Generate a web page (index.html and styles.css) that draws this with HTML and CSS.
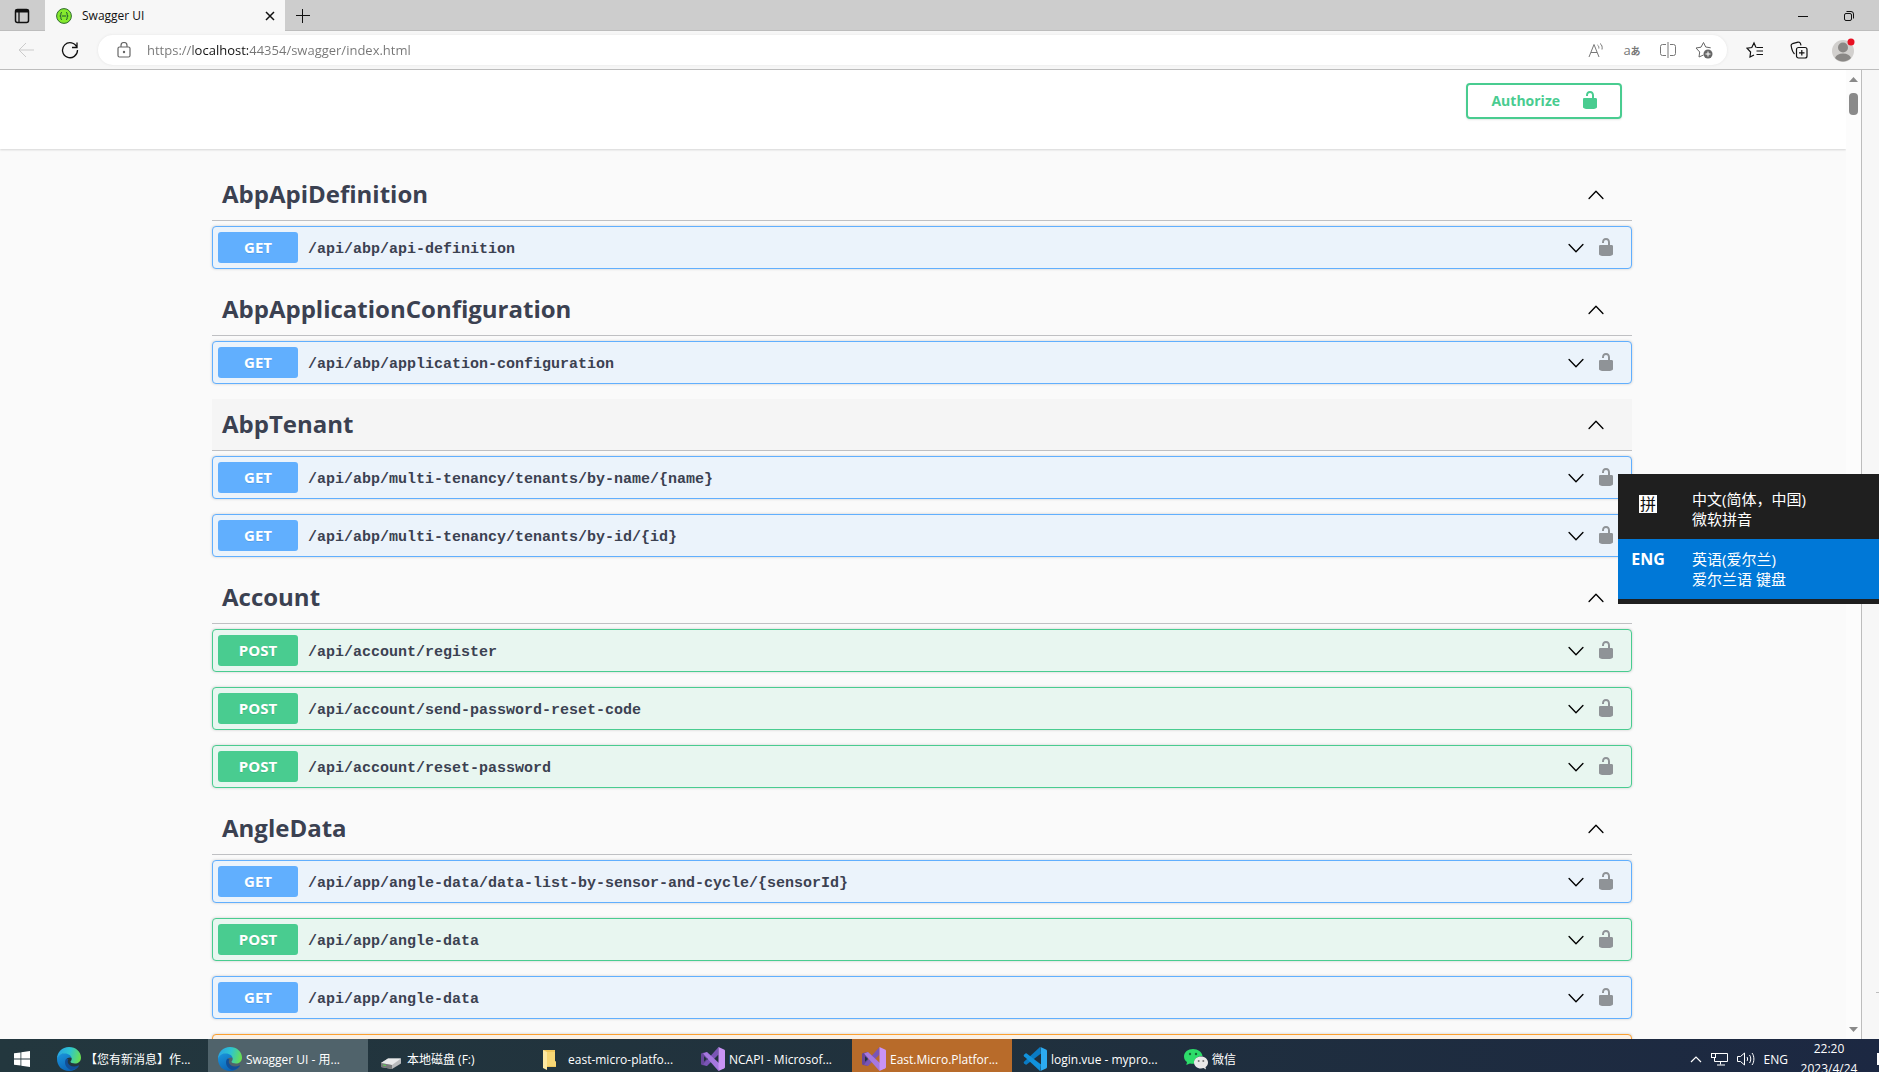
FILE: index.html
```html
<!DOCTYPE html>
<html lang="en">
<head>
<meta charset="utf-8">
<title>Swagger UI</title>
<link rel="stylesheet" href="styles.css">
</head>
<body>
<svg class="sprite" aria-hidden="true">
  <symbol id="unlocked" viewBox="0 0 20 20"><path d="M15.8 8H14V5.6C14 2.703 12.665 1 10 1 7.334 1 6 2.703 6 5.6V6h2v-.801C8 3.754 8.797 3 10 3c1.203 0 2 .754 2 2.199V8H4c-.553 0-1 .646-1 1.199V17c0 .549.428 1.139.951 1.307l1.197.387C5.672 18.861 6.55 19 7.1 19h5.8c.549 0 1.428-.139 1.951-.307l1.196-.387c.524-.167.953-.757.953-1.306V9.199C17 8.646 16.352 8 15.8 8z"/></symbol>
  <symbol id="up" viewBox="0 0 20 20"><path d="M17.418 14.908a.697.697 0 0 1-.979 0L10 8.316l-6.438 6.592a.697.697 0 0 1-.979 0 .697.697 0 0 1 0-.969l6.908-7.12a.697.697 0 0 1 .98 0l6.947 7.12a.697.697 0 0 1 0 .969z"/></symbol>
  <symbol id="down" viewBox="0 0 20 20"><path d="M17.418 6.109a.697.697 0 0 0-.979 0L10 12.701 3.562 6.109a.697.697 0 0 0-.979 0 .68.68 0 0 0 0 .969l6.908 7.12a.697.697 0 0 0 .98 0l6.947-7.12a.68.68 0 0 0 0-.969z"/></symbol>
  <symbol id="edge" viewBox="0 0 24 24">
    <defs>
      <linearGradient id="edge-top" x1="0" y1="0.4" x2="1" y2="0.6"><stop offset="0" stop-color="#29a5e4"/><stop offset=".5" stop-color="#2ec5cf"/><stop offset="1" stop-color="#6ae04d"/></linearGradient>
      <linearGradient id="edge-low" x1="0" y1="0" x2="0.6" y2="1"><stop offset="0" stop-color="#1b96dc"/><stop offset="1" stop-color="#0b62b4"/></linearGradient>
    </defs>
    <path fill="url(#edge-low)" d="M0 12C0 8 4 6 8 6c4 0 7 2 7 5-1-1-5-1-6 2-1 4 3 8 8 8 2 0 4-1 5-2-2 3-6 5-10 5C5 24 0 19 0 12z"/>
    <path fill="#124f97" d="M9 12c-2 3-1 9 5 11 4 0 7-3 8-4 .4-.5-.1-.8-.6-.5-5 2.500-9.400.2-10.400-2.500-.6-2 0-3 .5-3.500-.8-1-2-1-2.500-.5z"/>
    <path fill="url(#edge-top)" d="M0 12C0 5 5 0 12 0s12 5 12 10.500c0 4-3 6-6 6-2.500 0-4.500-.8-4.500-1.700 0-.7 1.200-1 1.200-3C14.700 8.800 11.500 6.500 8 6.500c-4 0-7 2-8 5.500z"/>
  </symbol>
  <symbol id="vs" viewBox="0 0 24 24">
    <path fill="#68479b" d="M1 6l5-1v14l-5-1c-.6-.2-1-.6-1-1V7c0-.4.400-.8 1-1z"/>
    <path fill="#7a55b5" d="M6 19l-4-1.500L17.500 0v7.500z"/>
    <path fill="#a678df" d="M2 6.500L6 5l13 12-1.500 7z"/>
    <path fill="#c993f5" d="M17.500 0L23 2.500c.6.300 1 .7 1 1.500v16c0 .7-.4 1.200-1 1.500L17.500 24z"/>
    <path fill="#23343f" d="M3 9.200L6 12l-3 2.800z"/>
  </symbol>
</svg>

<header class="tabstrip">
  <button class="tab-actions" aria-label="Tab actions"><svg width="16" height="16" viewBox="0 0 16 16" fill="none" stroke="#111" stroke-width="1.500"><rect x="1.500" y="1.500" width="13" height="13" rx="2"/><path d="M1.500 3h13" stroke-width="3"/><path d="M5 4v10" stroke-width="1.300"/></svg></button>
  <div class="tab">
    <svg width="16" height="16" viewBox="0 0 16 16"><circle cx="8" cy="8" r="7.400" fill="#85ea2d" stroke="#2f6b2f"/><path d="M6 4.500c-2 0-.8 2-1.200 3L3.800 8l1 .500c.4 1-.8 3 1.200 3M10 4.500c2 0 .8 2 1.200 3l1 .500-1 .500c-.4 1 .8 3-1.200 3M6 8h4" fill="none" stroke="#1d5332"/></svg>
    <span class="tab-title">Swagger UI</span>
    <button class="tab-close" aria-label="Close tab"><svg width="10" height="10" viewBox="0 0 10 10" stroke="#111" stroke-width="1.500"><path d="M1 1l8 8M9 1L1 9"/></svg></button>
  </div>
  <button class="new-tab" aria-label="New tab"><svg width="14" height="14" viewBox="0 0 14 14" stroke="#111"><path d="M6.500 0v14M0 6.500h14"/></svg></button>
  <div class="window-buttons">
    <button aria-label="Minimize"><svg width="10" height="10" viewBox="0 0 10 10" stroke="#111"><path d="M0 5.500h10"/></svg></button>
    <button aria-label="Restore"><svg width="10" height="10" viewBox="0 0 10 10" fill="none" stroke="#111"><rect x=".5" y="2.500" width="7" height="7" rx="1.500"/><path d="M2.500 .5H7a2.500 2.500 0 0 1 2.500 2.500v4.500"/></svg></button>
  </div>
</header>

<nav class="toolbar">
  <button aria-label="Back" disabled><svg width="16" height="16" viewBox="0 0 16 16" fill="none" stroke="#cbcbcb"><path d="M16 8H1M8 1L1 8l7 7"/></svg></button>
  <button aria-label="Refresh"><svg width="18" height="18" viewBox="0 0 18 18" fill="none" stroke="#111" stroke-width="1.300"><path d="M16 6.500A7.500 7.500 0 1 0 16.500 9M16 1.500v5h-5"/></svg></button>
  <div class="address">
    <svg width="14" height="16" viewBox="0 0 14 16" fill="none" stroke="#666" stroke-width="1.200"><rect x="1" y="5" width="12" height="10" rx="1.500"/><path d="M4 5V3.500a3 3 0 0 1 6 0V5"/><circle cx="7" cy="10" r=".6" fill="#666"/></svg>
    <input class="url" type="text" aria-label="Address" value="https://localhost:44354/swagger/index.html">
    <button aria-label="Read aloud"><svg width="17" height="16" viewBox="0 0 17 16" fill="none" stroke="#777"><path d="M1 15L6 2.500 11 15M3 10.500h6M9.500 3c1 .7 1.500 2 1.300 3.500M12 1.500c2 1.300 2.500 3.500 2 6"/></svg></button>
    <button class="translate" aria-label="Translate">a<small>あ</small></button>
    <button aria-label="Split screen"><svg width="16" height="16" viewBox="0 0 16 16" fill="none" stroke="#777"><path d="M6 2.500H2.500a2 2 0 0 0-2 2v7a2 2 0 0 0 2 2H6M10 2.500h3.500a2 2 0 0 1 2 2v7a2 2 0 0 1-2 2H10M8 0v16"/></svg></button>
    <button aria-label="Add to favorites"><svg width="18" height="18" viewBox="0 0 18 18" fill="none" stroke="#666"><path d="M8.500 14l-4.500 2 .7-5L1 7l5-.8L8.500 1.500 10.700 6l5 .8"/><circle cx="13" cy="13" r="4.500" fill="#666" stroke="none"/><path d="M13 10.500v5M10.500 13h5" stroke="#fff"/></svg></button>
  </div>
  <button aria-label="Favorites"><svg width="18" height="18" viewBox="0 0 18 18" fill="none" stroke="#111" stroke-width="1.200"><path d="M10 6.500L8 2 5.800 6.500 1 7.200 4.600 11 4 16l4-2M10.500 6.500H17M10.500 10H17M10.500 13.500H17"/></svg></button>
  <button aria-label="Collections"><svg width="18" height="18" viewBox="0 0 18 18" fill="none" stroke="#111" stroke-width="1.200"><rect x="6.500" y="6.500" width="10.500" height="10.500" rx="2"/><path d="M11.800 9v5.500M9 11.800h5.500M4.500 13C2.500 11 1.500 7 1.200 5c-.2-1 .3-2 1.300-2.300L8 1.200c1-.3 2 .2 2.400 1.200l.6 2"/></svg></button>
  <button aria-label="Profile"><svg width="24" height="24" viewBox="0 0 24 24"><circle cx="12" cy="13" r="11" fill="#d2d0ce"/><circle cx="12" cy="9.500" r="5" fill="#8a8886"/><path d="M4 20c1-3 4-4.500 8-4.500s7 1.500 8 4.500c-4 4.500-12 4.500-16 0z" fill="#8a8886"/><circle cx="20" cy="4" r="3.500" fill="#e81123"/></svg></button>
</nav>

<div class="viewport">
  <main class="page">
    <section class="scheme">
      <div class="wrapper">
        <button class="authorize">Authorize <svg width="20" height="20"><use href="#unlocked"/></svg></button>
      </div>
    </section>
    <div class="wrapper tags">
      <section>
        <h3 class="tag"><a href="#">AbpApiDefinition</a><button aria-label="Collapse"><svg width="20" height="20"><use href="#up"/></svg></button></h3>
        <div class="op get"><button class="method">GET</button><a class="path" href="#">/api/abp/api-definition</a><button aria-label="Expand"><svg width="20" height="20"><use href="#down"/></svg></button><button class="lock" aria-label="Authorization"><svg width="20" height="20"><use href="#unlocked"/></svg></button></div>
      </section>
      <section>
        <h3 class="tag"><a href="#">AbpApplicationConfiguration</a><button aria-label="Collapse"><svg width="20" height="20"><use href="#up"/></svg></button></h3>
        <div class="op get"><button class="method">GET</button><a class="path" href="#">/api/abp/application-configuration</a><button aria-label="Expand"><svg width="20" height="20"><use href="#down"/></svg></button><button class="lock" aria-label="Authorization"><svg width="20" height="20"><use href="#unlocked"/></svg></button></div>
      </section>
      <section>
        <h3 class="tag hovered"><a href="#">AbpTenant</a><button aria-label="Collapse"><svg width="20" height="20"><use href="#up"/></svg></button></h3>
        <div class="op get"><button class="method">GET</button><a class="path" href="#">/api/abp/multi-tenancy/tenants/by-name/{name}</a><button aria-label="Expand"><svg width="20" height="20"><use href="#down"/></svg></button><button class="lock" aria-label="Authorization"><svg width="20" height="20"><use href="#unlocked"/></svg></button></div>
        <div class="op get"><button class="method">GET</button><a class="path" href="#">/api/abp/multi-tenancy/tenants/by-id/{id}</a><button aria-label="Expand"><svg width="20" height="20"><use href="#down"/></svg></button><button class="lock" aria-label="Authorization"><svg width="20" height="20"><use href="#unlocked"/></svg></button></div>
      </section>
      <section>
        <h3 class="tag"><a href="#">Account</a><button aria-label="Collapse"><svg width="20" height="20"><use href="#up"/></svg></button></h3>
        <div class="op post"><button class="method">POST</button><a class="path" href="#">/api/account/register</a><button aria-label="Expand"><svg width="20" height="20"><use href="#down"/></svg></button><button class="lock" aria-label="Authorization"><svg width="20" height="20"><use href="#unlocked"/></svg></button></div>
        <div class="op post"><button class="method">POST</button><a class="path" href="#">/api/account/send-password-reset-code</a><button aria-label="Expand"><svg width="20" height="20"><use href="#down"/></svg></button><button class="lock" aria-label="Authorization"><svg width="20" height="20"><use href="#unlocked"/></svg></button></div>
        <div class="op post"><button class="method">POST</button><a class="path" href="#">/api/account/reset-password</a><button aria-label="Expand"><svg width="20" height="20"><use href="#down"/></svg></button><button class="lock" aria-label="Authorization"><svg width="20" height="20"><use href="#unlocked"/></svg></button></div>
      </section>
      <section>
        <h3 class="tag"><a href="#">AngleData</a><button aria-label="Collapse"><svg width="20" height="20"><use href="#up"/></svg></button></h3>
        <div class="op get"><button class="method">GET</button><a class="path" href="#">/api/app/angle-data/data-list-by-sensor-and-cycle/{sensorId}</a><button aria-label="Expand"><svg width="20" height="20"><use href="#down"/></svg></button><button class="lock" aria-label="Authorization"><svg width="20" height="20"><use href="#unlocked"/></svg></button></div>
        <div class="op post"><button class="method">POST</button><a class="path" href="#">/api/app/angle-data</a><button aria-label="Expand"><svg width="20" height="20"><use href="#down"/></svg></button><button class="lock" aria-label="Authorization"><svg width="20" height="20"><use href="#unlocked"/></svg></button></div>
        <div class="op get"><button class="method">GET</button><a class="path" href="#">/api/app/angle-data</a><button aria-label="Expand"><svg width="20" height="20"><use href="#down"/></svg></button><button class="lock" aria-label="Authorization"><svg width="20" height="20"><use href="#unlocked"/></svg></button></div>
        <div class="op put"></div>
      </section>
    </div>
  </main>
  <div class="scrollbar">
    <svg width="9" height="5" viewBox="0 0 9 5"><path d="M0 5L4.500 0 9 5z" fill="#8a8a8a"/></svg>
    <div class="thumb"></div>
    <svg width="9" height="5" viewBox="0 0 9 5"><path d="M0 0l4.500 5L9 0z" fill="#8a8a8a"/></svg>
  </div>
  <aside class="sidebar"><hr></aside>
</div>

<footer class="taskbar">
  <button class="start" aria-label="Start"><svg width="16" height="16" viewBox="0 0 16 16" fill="#fff"><path d="M0 2.300L6.500 1.400V7.600H0zM7.300 1.300L16 0v7.600H7.300zM0 8.400h6.500v6.200L0 13.700zM7.300 8.400H16V16l-8.700-1.300z"/></svg></button>
  <button class="task"><svg width="24" height="24"><use href="#edge"/></svg><span>【您有新消息】作...</span></button>
  <button class="task active"><svg width="24" height="24"><use href="#edge"/></svg><span>Swagger UI - 用...</span></button>
  <button class="task"><svg width="24" height="24" viewBox="0 0 24 24"><path d="M2 16L9 11.500h13v5L13 22 2 20z" fill="#b9bbbd"/><path d="M2 16l7-4.500h13L13 18z" fill="#e8e9ea"/><path d="M2 16l11 2v4L2 20z" fill="#77797b"/><path d="M4 18l3 .5" stroke="#55d94a"/></svg><span>本地磁盘 (F:)</span></button>
  <button class="task"><svg width="24" height="24" viewBox="0 0 24 24"><path d="M3 3h12v11l1 1v5H6z" fill="#f0c75c"/><path d="M3 3l4 2v18l-4-2z" fill="#ffe9a2"/><path d="M7 5h8v9l1 1v4H7z" fill="#f8d775"/></svg><span>east-micro-platfo...</span></button>
  <button class="task"><svg width="24" height="24"><use href="#vs"/></svg><span>NCAPI - Microsof...</span></button>
  <button class="task alert"><svg width="24" height="24"><use href="#vs"/></svg><span>East.Micro.Platfor...</span></button>
  <button class="task"><svg width="24" height="24" viewBox="0 0 24 24"><path d="M17 0L1 14.700c-.5.500-.5 1 0 1.500l1.500 1.300c.4.300.8.300 1.200 0L18 6.500z" fill="#0a7bc4"/><path d="M17 24L1 9.300c-.5-.5-.5-1 0-1.500l1.500-1.300c.4-.3.8-.3 1.200 0L18 17.500z" fill="#1192dc"/><path d="M17.500 0L23 2.500c.6.300 1 .8 1 1.500v16c0 .7-.4 1.200-1 1.500L17.500 24 18 18V6z" fill="#2cabf2"/></svg><span>login.vue - mypro...</span></button>
  <button class="task"><svg width="24" height="24" viewBox="0 0 24 24"><path d="M9 2C4 2 0 5 0 9.500c0 2.300 1.200 4.300 3 5.500l-.7 3L6 16.500c1 .3 3 .4 4 .3 0-5 4-8 8.500-7.800C18 5 14 2 9 2z" fill="#2ddc6a"/><path d="M17 9.500c-4 0-7 2.700-7 6s3 6 7 6c.8 0 1.700-.1 2.500-.4L22 22.500l-.5-2.300c1.500-1 2.500-2.800 2.500-4.700 0-3.300-3-6-7-6z" fill="#e9e9e9"/><circle cx="6" cy="7" r="1.200" fill="#146b35"/><circle cx="12" cy="7" r="1.200" fill="#146b35"/><circle cx="14.700" cy="14" r="1" fill="#777"/><circle cx="19.300" cy="14" r="1" fill="#777"/></svg><span>微信</span></button>
  <div class="tray">
    <svg width="12" height="8" viewBox="0 0 12 8" fill="none" stroke="#fff" stroke-width="1.200"><path d="M1 7l5-5 5 5"/></svg>
    <svg width="17" height="14" viewBox="0 0 17 14" fill="none" stroke="#fff"><path d="M5 1.500h11.500v8H3.500V6M9.500 9.500v3M6 13h8"/><rect x=".5" y="1.500" width="4" height="4"/></svg>
    <svg width="18" height="14" viewBox="0 0 18 14" fill="none" stroke="#fff"><path d="M.5 4.500h3L7.500 1v12l-4-3.500h-3zM10 5c.8 1 .8 3 0 4M12.500 3c1.700 2 1.700 6 0 8M15 1c2.500 3 2.500 9 0 12"/></svg>
    <span class="lang">ENG</span>
    <div class="clock"><span>22:20</span><span>2023/4/24</span></div>
    <i class="notice"></i>
  </div>
</footer>

<div class="ime">
  <button class="ime-row"><span class="ime-badge"><b>拼</b></span><span>中文(简体，中国)<br>微软拼音</span></button>
  <button class="ime-row selected"><span class="ime-badge">ENG</span><span>英语(爱尔兰)<br>爱尔兰语 键盘</span></button>
</div>
</body>
</html>
```
FILE: styles.css
```css
* { box-sizing: border-box; }

body {
  margin: 0;
  height: 100vh;
  display: flex;
  flex-direction: column;
  overflow: hidden;
  background: #f7f7f7;
  font-family: "Open Sans", "Noto Sans CJK SC", sans-serif;
  color: #3b4151;
}

button {
  display: flex;
  align-items: center;
  justify-content: center;
  margin: 0;
  padding: 0;
  border: 0;
  background: none;
  font: inherit;
  color: inherit;
}

a { color: inherit; text-decoration: none; }
svg { display: block; flex: none; }
.sprite { position: absolute; width: 0; height: 0; }

/* Browser chrome */
.tabstrip {
  flex: none;
  display: flex;
  height: 31px;
  background: #cdcdcd;
  box-shadow: inset 0 -1px #bdbdbd;
}
.tab-actions { width: 45px; padding-right: 2px; }
.tab {
  display: flex;
  align-items: center;
  width: 240px;
  padding: 0 9px 0 11px;
  background: #f7f7f7;
}
.tab-title { flex: 1; padding-left: 10px; font-size: 12px; color: #111; }
.tab-close { width: 12px; height: 12px; }
.new-tab { width: 36px; }
.window-buttons { display: flex; margin-left: auto; padding-right: 7px; }
.window-buttons button { width: 46px; }

.toolbar {
  flex: none;
  display: flex;
  align-items: center;
  height: 38px;
  padding-right: 14px;
}
.toolbar > button { width: 44px; height: 30px; }
.toolbar > button:first-child { margin-left: 4px; }
.address {
  flex: 1;
  display: flex;
  align-items: center;
  height: 30px;
  margin: 0 6px;
  padding: 0 5px 0 19px;
  border-radius: 15px;
  background: #fff;
  box-shadow: 0 0 3px #e4e4e4;
}
.address button { width: 36px; height: 30px; }
.url {
  flex: 1;
  min-width: 0;
  margin-left: 16px;
  padding: 0;
  border: 0;
  outline: 0;
  font: 13px/20px "Open Sans", sans-serif;
  color: transparent;
  background: linear-gradient(to right, #757575 46px, #111 46px, #111 101px, #757575 101px);
  -webkit-background-clip: text;
  background-clip: text;
}
.translate { font-size: 13px; color: #777; }
.translate small { font-size: 10px; font-weight: 700; }

/* Page viewport */
.viewport {
  flex: 1;
  min-height: 0;
  display: flex;
  border-top: 1px solid #bdbdbd;
}
.page { flex: 1; min-width: 0; overflow: hidden; background: #fafafa; }
.scrollbar {
  width: 16px;
  display: flex;
  flex-direction: column;
  align-items: center;
  padding: 7px 0;
  border-right: 1px solid #bdbdbd;
  background: #fcfcfc;
}
.thumb { width: 9px; height: 22px; margin: 11px 0 auto; border-radius: 4px; background: #8a8a8a; }
.sidebar { width: 17px; display: flex; align-items: flex-end; justify-content: flex-end; padding-bottom: 46px; }
.sidebar hr { width: 3px; height: 1px; margin: 0; border: 0; background: #bdbdbd; }

.wrapper { max-width: 1460px; margin: 0 auto; padding: 0 21px 0 19px; }
.scheme { padding: 13px 0 30px; background: #fff; box-shadow: 0 1px 2px rgba(0, 0, 0, .15); }
.scheme .wrapper { display: flex; justify-content: flex-end; padding-right: 31px; }
.authorize {
  gap: 20px;
  height: 36px;
  padding: 0 20px 2px 23px;
  border: 2px solid #49cc90;
  border-radius: 4px;
  box-shadow: 0 1px 2px rgba(0, 0, 0, .1);
  font-size: 14px;
  font-weight: 700;
  color: #49cc90;
}
.authorize svg { fill: #49cc90; }

.tags { padding-top: 20px; }
.tag {
  display: flex;
  align-items: center;
  height: 52px;
  margin: 0 0 5px;
  padding: 0 20px 2px 10px;
  border-bottom: 1px solid #bfc0c3;
  font-size: 24px;
  font-weight: 700;
}
.tag a { flex: 1; }
.tag button { width: 32px; height: 30px; }
.hovered { background: #f5f5f5; }

.op {
  display: flex;
  align-items: center;
  height: 43px;
  margin-bottom: 15px;
  padding: 0 15px 0 5px;
  border: 1px solid;
  border-radius: 4px;
  box-shadow: 0 0 3px rgba(0, 0, 0, .19);
}
.get { border-color: #61affe; background: #ebf3fb; }
.post { border-color: #49cc90; background: #e8f6f0; }
.put { border-color: #fca130; background: #fbf1e6; }
.method {
  width: 80px;
  height: 31px;
  padding-bottom: 1px;
  border-radius: 3px;
  font-size: 15px;
  font-weight: 700;
  color: #fff;
  text-shadow: 0 1px 0 rgba(0, 0, 0, .1);
}
.get .method { background: #61affe; }
.post .method { background: #49cc90; }
.path {
  flex: 1;
  padding: 4px 0 0 10px;
  font: 700 15px/20px "Liberation Mono", monospace;
}
.lock { width: 20px; height: 24px; margin-left: 10px; padding-bottom: 2px; }
.lock svg { fill: #8f9397; }

/* Desktop taskbar */
.taskbar {
  flex: none;
  display: flex;
  height: 33px;
  overflow: hidden;
  background: linear-gradient(to right, #23373e, #20313d 50%, #1c2842);
  font-size: 12px;
  color: #fff;
}
.start, .task { height: 40px; }
.start { width: 44px; margin-right: 3px; }
.task {
  width: 160px;
  margin-right: 1px;
  padding: 0 4px 0 10px;
  justify-content: flex-start;
  gap: 4px;
  white-space: nowrap;
}
.active { background: #50636b; }
.alert { background: #b86b2a; }
.tray { display: flex; align-items: center; gap: 9px; height: 40px; margin-left: auto; }
.clock { width: 64px; margin-right: 7px; text-align: center; line-height: 20px; }
.clock span { display: block; }
.notice { width: 2px; height: 12px; background: #fff; }

/* Input language switcher */
.ime {
  position: absolute;
  right: 0;
  top: 474px;
  width: 261px;
  padding: 5px 0;
  background: #1f1f1f;
  font-size: 15px;
  line-height: 20px;
  color: #fff;
}
.ime-row { width: 100%; height: 60px; justify-content: flex-start; text-align: left; }
.ime-badge { width: 60px; margin-right: 14px; height: 40px; text-align: center; font-size: 16px; font-weight: 700; }
.ime-badge b { display: block; width: 18px; margin: 6px auto; line-height: 18px; background: #fff; color: #111; font-weight: 400; }
.selected { background: #0078d7; }
```
